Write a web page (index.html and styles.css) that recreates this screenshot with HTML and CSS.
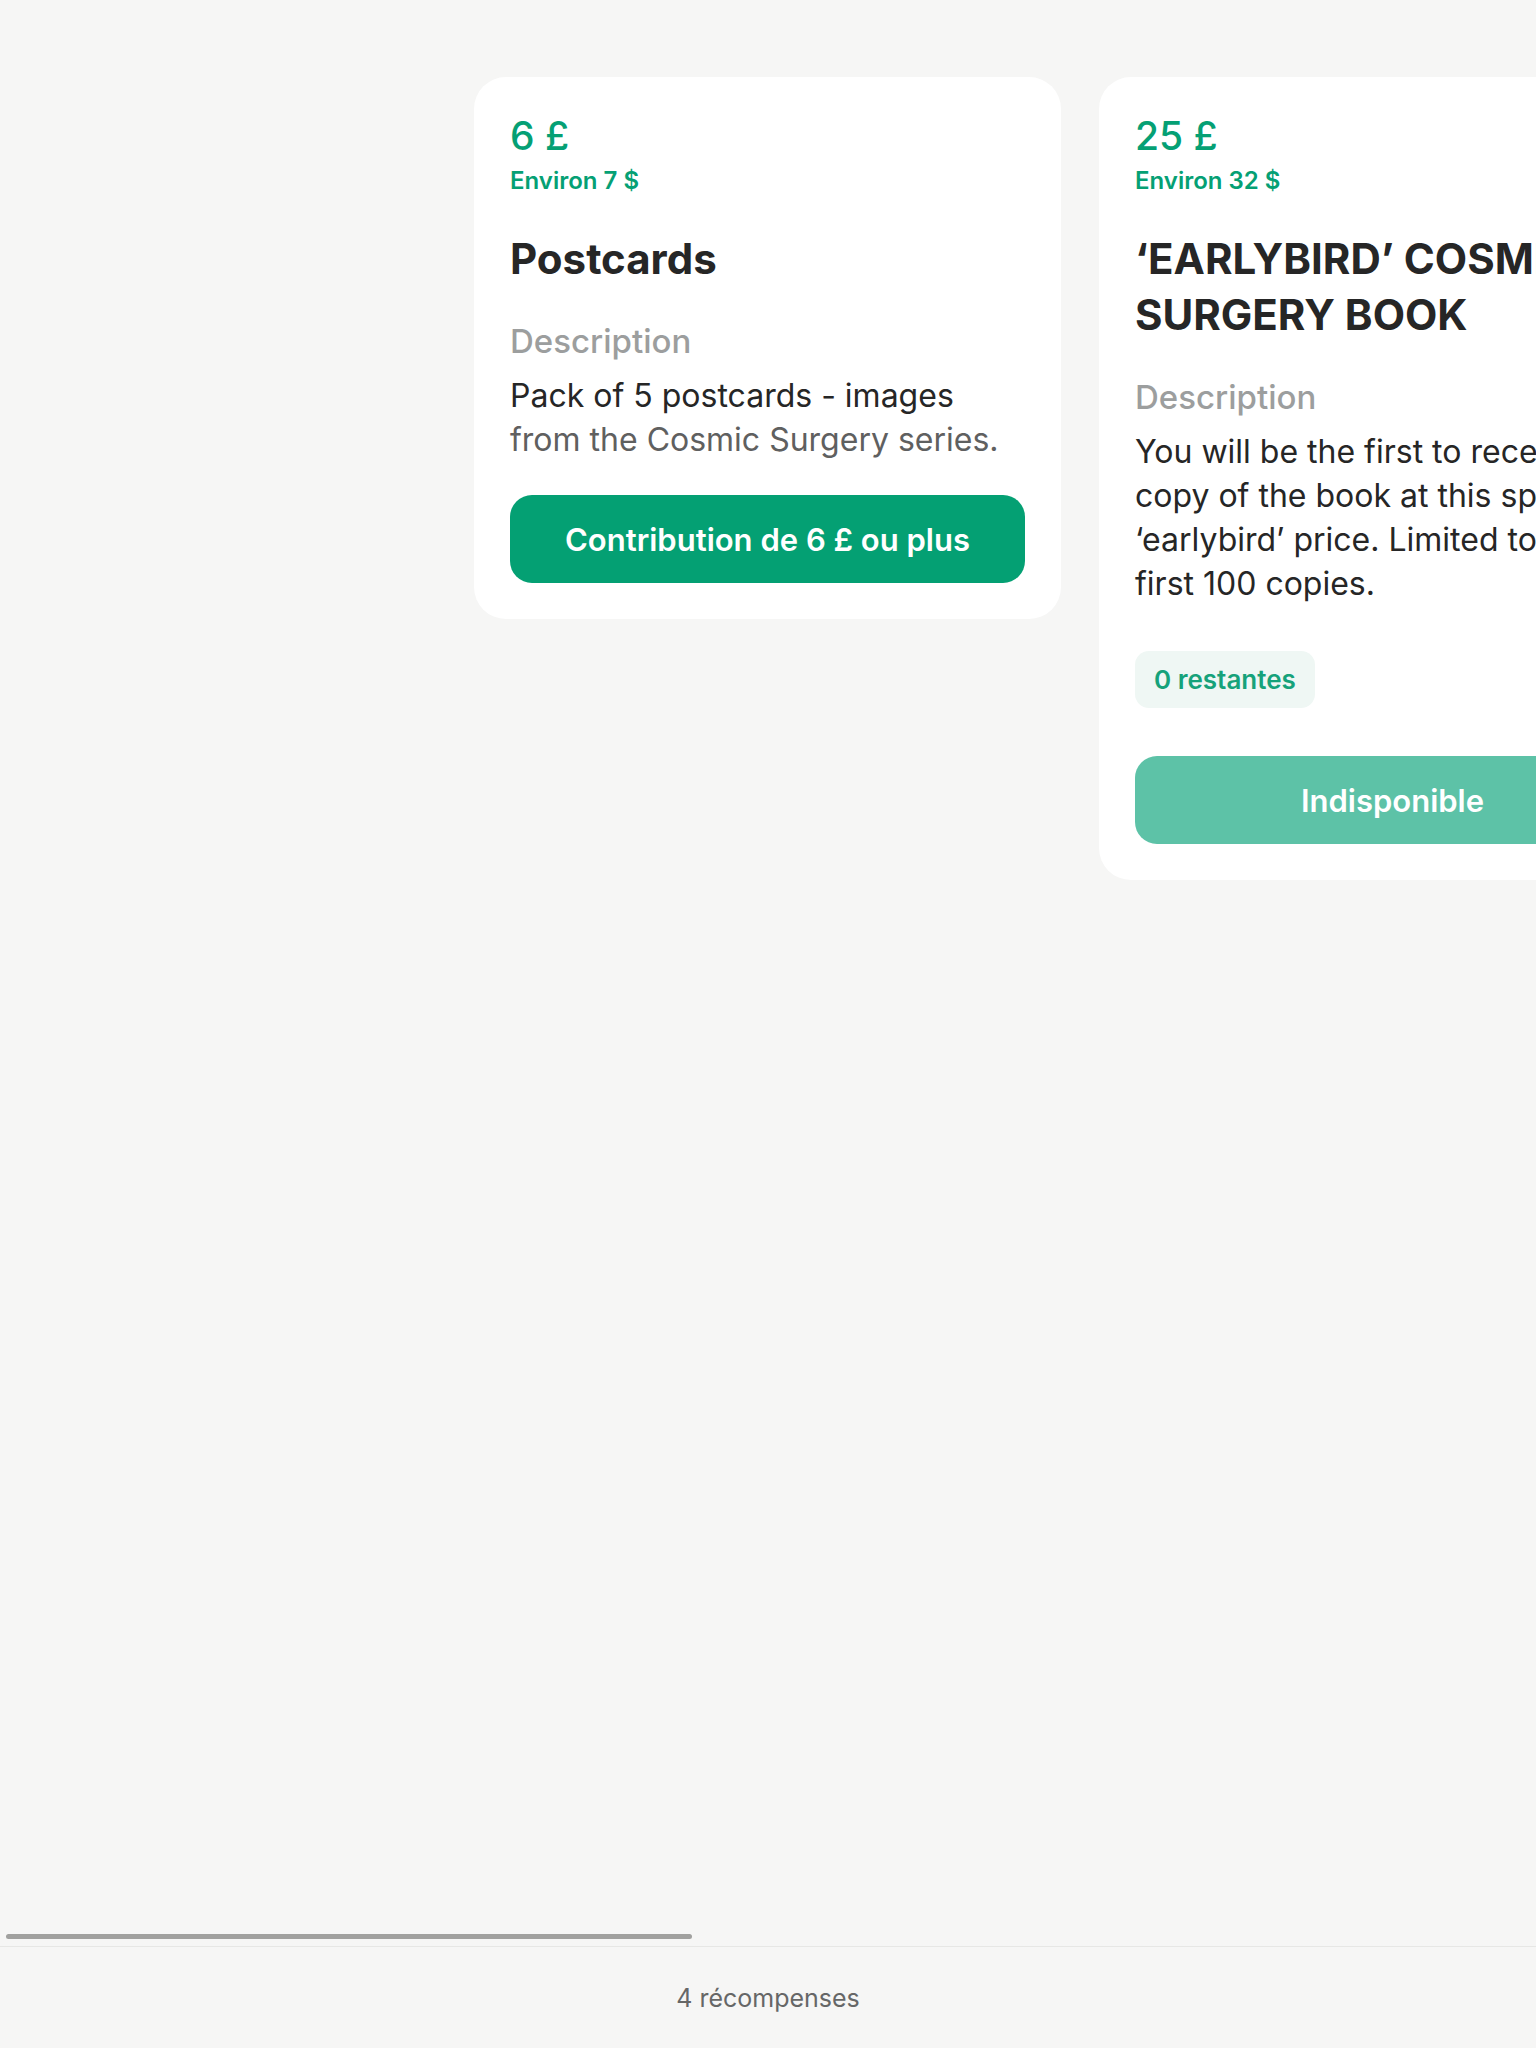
FILE: index.html
```html
<!DOCTYPE html>
<html lang="fr">
<head>
<meta charset="utf-8">
<title>Récompenses</title>
<link rel="stylesheet" href="styles.css">
</head>
<body>
<div class="page">
  <div class="rail">
    <div class="card">
      <div class="price">6 £</div>
      <div class="approx">Environ 7 $</div>
      <h2 class="title">Postcards</h2>
      <div class="label">Description</div>
      <p class="body"><span class="dark">Pack of 5 postcards - images</span><br><span class="faded">from the Cosmic Surgery series.</span></p>
      <button class="btn btn-first">Contribution de 6 £ ou plus</button>
    </div>
    <div class="card">
      <div class="price">25 £</div>
      <div class="approx">Environ 32 $</div>
      <h2 class="title">‘EARLYBIRD’ COSMIC SURGERY BOOK</h2>
      <div class="label">Description</div>
      <p class="body dark">You will be the first to receive a copy of the book at this special ‘earlybird’ price. Limited to the first 100 copies.</p>
      <div class="badge">0 restantes</div>
      <button class="btn btn-disabled">Indisponible</button>
    </div>
  </div>
  <div class="scrollbar"><div class="thumb"></div></div>
  <div class="footer">4 récompenses</div>
</div>
</body>
</html>
```
FILE: styles.css
```css
html, body {
  margin: 0;
  padding: 0;
  background: #f6f6f5;
  overflow: hidden;
}
.page {
  width: 1536px;
  height: 2048px;
  display: flex;
  flex-direction: column;
  font-family: "Inter", "Liberation Sans", sans-serif;
  color: #262626;
}
.rail {
  flex: 1;
  display: flex;
  align-items: flex-start;
  gap: 38px;
  padding: 77px 0 0 474px;
  overflow: hidden;
}
.card {
  flex: 0 0 587px;
  box-sizing: border-box;
  background: #fff;
  border-radius: 32px;
  padding: 36px;
}
.price {
  font-size: 39px;
  font-weight: 500;
  line-height: 46px;
  color: #05a074;
}
.approx {
  margin-top: 8px;
  font-size: 24px;
  font-weight: 600;
  line-height: 28px;
  color: #05a074;
}
.title {
  margin: 36px 0 0;
  font-size: 42px;
  font-weight: 700;
  line-height: 56px;
  color: #262626;
}
.label {
  margin-top: 34px;
  font-size: 33px;
  font-weight: 500;
  line-height: 40px;
  color: #9c9e9e;
}
.body {
  margin: 13px 0 0;
  font-size: 32px;
  line-height: 44px;
}
.dark { color: #262626; }
.faded { color: #5f6060; }
.badge {
  display: inline-block;
  margin-top: 45px;
  padding: 0 19px;
  height: 57px;
  line-height: 57px;
  border-radius: 14px;
  background: #eff7f4;
  color: #16a27a;
  font-size: 26px;
  font-weight: 600;
}
.btn {
  display: block;
  width: 100%;
  height: 88px;
  border: 0;
  border-radius: 22px;
  font-family: inherit;
  font-size: 31px;
  font-weight: 600;
  color: #fff;
}
.btn-first {
  margin-top: 33px;
  background: #04a073;
}
.btn-disabled {
  margin-top: 48px;
  background: #5dc2a7;
}
.scrollbar {
  height: 5px;
  padding: 0 0 7px 6px;
}
.thumb {
  width: 686px;
  height: 5px;
  border-radius: 3px;
  background: #a1a19f;
}
.footer {
  height: 101px;
  border-top: 1px solid #e7e7e5;
  display: flex;
  align-items: center;
  justify-content: center;
  font-size: 25px;
  color: #666767;
}
```
